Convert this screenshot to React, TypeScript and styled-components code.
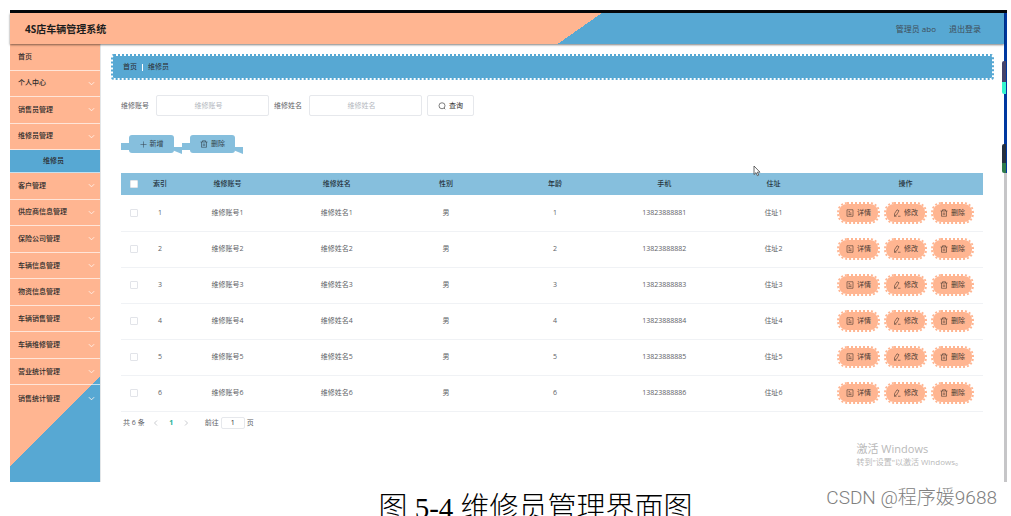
import React from 'react';
import styled, { createGlobalStyle, css } from 'styled-components';

const color = {
  blue: '#57a8d3',
  lightBlue: '#86bfdd',
  peach: '#ffb591',
  ink: '#2b2b2b',
  text: '#606266',
  line: '#e6e8ec',
};

const GlobalStyle = createGlobalStyle`
  *, *::before, *::after { box-sizing: border-box; }
  body {
    margin: 0;
    background: #fff;
    color: ${color.text};
    font-family: 'Open Sans', 'Noto Sans CJK SC', sans-serif;
    font-size: 7px;
    line-height: 10px;
  }
  button, input { font: inherit; color: inherit; margin: 0; }
  button { cursor: pointer; }
  a { color: inherit; text-decoration: none; }
`;

const Page = styled.div`
  position: relative;
  padding: 10px 4px 0 10px;
`;

const Screen = styled.div`
  position: relative;
  display: flex;
  border-top: 3px solid #05070a;
`;

const Shell = styled.div`
  flex: 1;
  min-width: 0;
`;

const Header = styled.header`
  position: relative;
  z-index: 1;
  display: flex;
  align-items: center;
  justify-content: space-between;
  height: 31px;
  padding: 0 23px 0 15px;
  background: linear-gradient(145deg, ${color.peach} 57%, ${color.blue} 57%);
  box-shadow: 0 1px 2px rgba(0, 0, 0, 0.5);
`;

const Title = styled.h1`
  margin: 0;
  font-size: 10px;
  line-height: 14px;
  font-weight: 700;
  color: #1d1d1d;
`;

const Account = styled.div`
  display: flex;
  gap: 13px;
  font-size: 8px;
  line-height: 12px;
  color: #3f4d57;
`;

const Body = styled.div`
  display: flex;
  min-height: 438px;
`;

const Sidebar = styled.nav`
  flex: 0 0 91px;
  border-right: 1px solid #e3e6e8;
  background: linear-gradient(135deg, ${color.peach} 80%, ${color.blue} 80%);
`;

const MenuList = styled.ul`
  display: grid;
  grid-template-rows: repeat(4, 1fr) 23px repeat(9, 1fr);
  height: 368px;
  margin: 0;
  padding: 0;
  list-style: none;
`;

const MenuItem = styled.li<{ $active?: boolean }>`
  display: flex;
  border-bottom: 1px solid rgba(255, 255, 255, 0.65);
  &:last-child { border-bottom: 0; }
  ${({ $active }) => $active && css`
    justify-content: center;
    background: ${color.blue};
  `}
`;

const MenuLink = styled.a<{ $sub?: boolean }>`
  flex: ${({ $sub }) => ($sub ? 'none' : 1)};
  display: flex;
  align-items: center;
  justify-content: space-between;
  padding: ${({ $sub }) => ($sub ? '0 3px 0 0' : '0 5px 0 8px')};
  font-weight: 500;
  color: ${color.ink};
`;

const Content = styled.main`
  flex: 1;
  min-width: 0;
  padding: 10px 10px 0;
`;

const Breadcrumb = styled.div`
  display: flex;
  align-items: center;
  gap: 5px;
  height: 26px;
  padding: 0 10px;
  border: 2px dotted ${color.blue};
  border-radius: 3px;
  background: ${color.blue};
  background-clip: padding-box;
  color: ${color.ink};
`;

const Divider = styled.span`
  width: 1px;
  height: 7px;
  background: #fff;
`;

const Panel = styled.section`
  padding: 15px 11px 0 10px;
`;

const Filters = styled.form`
  display: flex;
  align-items: center;
  gap: 5px;
`;

const Field = styled.label`
  display: flex;
  align-items: center;
  gap: 7px;
`;

const TextInput = styled.input`
  width: 113px;
  height: 21px;
  padding: 0 9px 0 1px;
  border: 1px solid ${color.line};
  border-radius: 2px;
  background: #fff;
  text-align: center;
  outline: none;
  &::placeholder { color: #b4b8c0; opacity: 1; }
`;

const SearchButton = styled.button`
  display: flex;
  align-items: center;
  justify-content: center;
  gap: 3px;
  width: 47px;
  height: 21px;
  padding: 0;
  border: 1px solid ${color.line};
  border-radius: 2px;
  background: #fff;
  color: ${color.ink};
`;

const Toolbar = styled.div`
  display: flex;
  margin: 19px 0;
`;

const RibbonButton = styled.button`
  display: flex;
  align-items: flex-start;
  padding: 0;
  border: 0;
  background: none;
  color: #33424c;
  &::before {
    content: '';
    width: 8px;
    height: 7px;
    margin-top: 8px;
    background: ${color.lightBlue};
  }
  &::after {
    content: '';
    width: 8px;
    height: 7px;
    margin-top: 12px;
    background: ${color.lightBlue};
    clip-path: polygon(0 0, 100% 0, 100% 100%, 0 55%);
  }
`;

const RibbonFace = styled.span`
  display: flex;
  align-items: center;
  justify-content: center;
  gap: 3px;
  width: 45px;
  height: 18px;
  border-radius: 3px;
  background: ${color.lightBlue};
`;

const Table = styled.table`
  width: 100%;
  table-layout: fixed;
  border-collapse: collapse;
  text-align: center;
`;

const HeadCell = styled.th`
  height: 22px;
  padding: 0;
  background: ${color.lightBlue};
  font-weight: 500;
  color: #26343d;
`;

const Cell = styled.td`
  height: 36px;
  padding: 0;
  border-bottom: 1px solid #f0f2f5;
`;

const Check = styled.input`
  display: block;
  width: 8px;
  height: 8px;
  margin: 0 auto;
  appearance: none;
  border: 1px solid #e2e4e9;
  border-radius: 1px;
  background: #fff;
`;

const Actions = styled.div`
  display: flex;
  justify-content: center;
  gap: 4px;
`;

const PillButton = styled.button`
  display: flex;
  align-items: center;
  justify-content: center;
  gap: 3px;
  width: 43px;
  height: 22px;
  padding: 0;
  border: 2px dotted ${color.peach};
  border-radius: 10px;
  background: ${color.peach};
  background-clip: padding-box;
  color: #4a3a33;
`;

const Pager = styled.div`
  display: flex;
  align-items: center;
  padding: 5px 2px;
`;

const PagerButton = styled.button<{ $current?: boolean }>`
  display: flex;
  justify-content: center;
  width: 15px;
  padding: 0;
  border: 0;
  background: none;
  font-weight: ${({ $current }) => ($current ? 700 : 400)};
  color: ${({ $current }) => ($current ? '#24ae95' : '#a5a8ae')};
`;

const PagerTotal = styled.span`
  margin-right: 4px;
`;

const PagerJump = styled.label`
  display: flex;
  align-items: center;
  gap: 2px;
  margin-left: 11px;
`;

const PageInput = styled.input`
  width: 24px;
  height: 12px;
  padding: 0;
  border: 1px solid ${color.line};
  border-radius: 2px;
  text-align: center;
  color: ${color.ink};
  outline: none;
`;

const EdgeStrip = styled.div`
  flex: 0 0 3px;
  background: linear-gradient(#0038a0 160px, #c6c6c8 160px);
`;

const EdgeMark = styled.span<{ $top: number; $height: number; $fill: string }>`
  position: absolute;
  right: 1px;
  top: ${({ $top }) => $top}px;
  width: 4px;
  height: ${({ $height }) => $height}px;
  border-radius: 2px 0 0 2px;
  background: ${({ $fill }) => $fill};
`;

const Pointer = styled.svg`
  position: absolute;
  left: 743px;
  top: 152px;
`;

const Activation = styled.div`
  position: absolute;
  right: 44px;
  bottom: 14px;
  font-size: 8px;
  line-height: 12px;
  color: #b9b9b9;
`;

const ActivationTitle = styled.div`
  font-size: 11px;
  line-height: 14px;
`;

const Caption = styled.p`
  height: 34px;
  margin: 0;
  padding-left: 54px;
  overflow: hidden;
  text-align: center;
  font-family: 'Liberation Serif', 'Noto Sans CJK SC', serif;
  font-size: 29px;
  line-height: 53px;
  font-weight: 300;
  color: #000;
`;

const Signature = styled.span`
  position: absolute;
  right: 14px;
  bottom: 6px;
  font-family: Roboto, 'Noto Sans CJK SC', sans-serif;
  font-size: 19px;
  line-height: 24px;
  font-weight: 300;
  color: #808080;
`;

type IconName = 'detail' | 'edit' | 'trash' | 'plus' | 'search' | 'left' | 'right' | 'down';

const iconPaths: Record<IconName, string> = {
  detail: 'M2 1.5h12v13H2zM5 5h3M5 8h6M5 11h6',
  edit: 'M8 1.500l4 2-5 8.500-4 1.500 0-4zM2 14.500h5M10 14.500h5',
  trash: 'M1 4h14M5 4V1.500h6V4M3 4v10.500h10V4M6.500 7v5M9.500 7v5',
  plus: 'M8 1v14M1 8h14',
  search: 'M8 1.500a6 6 0 1 0 0 12a6 6 0 1 0 0-12M12 12l2.500 2.500',
  left: 'M10 3L5 8l5 5',
  right: 'M6 3l5 5-5 5',
  down: 'M2 5l6 6 6-6',
};

function Icon({ name, size = 8, weight = 1.2 }: { name: IconName; size?: number; weight?: number }) {
  return (
    <svg width={size} height={size} viewBox="0 0 16 16" fill="none" stroke="currentColor" strokeWidth={weight} aria-hidden="true">
      <path d={iconPaths[name]} />
    </svg>
  );
}

const MenuArrow = styled.span`
  display: flex;
  color: #fff3ec;
`;

const menu = [
  { label: '首页', leaf: true },
  { label: '个人中心' },
  { label: '销售员管理' },
  { label: '维修员管理' },
  { label: '维修员', sub: true },
  { label: '客户管理' },
  { label: '供应商信息管理' },
  { label: '保险公司管理' },
  { label: '车辆信息管理' },
  { label: '物资信息管理' },
  { label: '车辆销售管理' },
  { label: '车辆维修管理' },
  { label: '营业统计管理' },
  { label: '销售统计管理' },
];

const columns = ['索引', '维修账号', '维修姓名', '性别', '年龄', '手机', '住址', '操作'];
const rows = [1, 2, 3, 4, 5, 6];

const actions: { icon: IconName; label: string }[] = [
  { icon: 'detail', label: '详情' },
  { icon: 'edit', label: '修改' },
  { icon: 'trash', label: '删除' },
];

export default function App() {
  return (
    <>
      <GlobalStyle />
      <Page>
        <Screen>
          <Shell>
            <Header>
              <Title>4S店车辆管理系统</Title>
              <Account>
                <span>管理员 abo</span>
                <a href="#logout">退出登录</a>
              </Account>
            </Header>
            <Body>
              <Sidebar>
                <MenuList>
                  {menu.map(({ label, leaf, sub }) => (
                    <MenuItem key={label} $active={sub}>
                      <MenuLink href="#menu" $sub={sub}>
                        {label}
                        {!leaf && !sub && <MenuArrow><Icon name="down" size={7} weight={2} /></MenuArrow>}
                      </MenuLink>
                    </MenuItem>
                  ))}
                </MenuList>
              </Sidebar>
              <Content>
                <Breadcrumb>
                  <a href="#home">首页</a>
                  <Divider />
                  <span>维修员</span>
                </Breadcrumb>
                <Panel>
                  <Filters onSubmit={(e) => e.preventDefault()}>
                    <Field>维修账号<TextInput placeholder="维修账号" /></Field>
                    <Field>维修姓名<TextInput placeholder="维修姓名" /></Field>
                    <SearchButton type="submit"><Icon name="search" />查询</SearchButton>
                  </Filters>
                  <Toolbar>
                    <RibbonButton type="button"><RibbonFace><Icon name="plus" size={7} />新增</RibbonFace></RibbonButton>
                    <RibbonButton type="button"><RibbonFace><Icon name="trash" />删除</RibbonFace></RibbonButton>
                  </Toolbar>
                  <Table>
                    <colgroup>
                      <col width="26" />
                      <col width="26" />
                      <col span={6} />
                      <col width="155" />
                    </colgroup>
                    <thead>
                      <tr>
                        <HeadCell><Check type="checkbox" aria-label="全选" /></HeadCell>
                        {columns.map((name) => <HeadCell key={name}>{name}</HeadCell>)}
                      </tr>
                    </thead>
                    <tbody>
                      {rows.map((n) => (
                        <tr key={n}>
                          <Cell><Check type="checkbox" aria-label={`选择 ${n}`} /></Cell>
                          <Cell>{n}</Cell>
                          <Cell>维修账号{n}</Cell>
                          <Cell>维修姓名{n}</Cell>
                          <Cell>男</Cell>
                          <Cell>{n}</Cell>
                          <Cell>1382388888{n}</Cell>
                          <Cell>住址{n}</Cell>
                          <Cell>
                            <Actions>
                              {actions.map(({ icon, label }) => (
                                <PillButton key={label} type="button"><Icon name={icon} />{label}</PillButton>
                              ))}
                            </Actions>
                          </Cell>
                        </tr>
                      ))}
                    </tbody>
                  </Table>
                  <Pager>
                    <PagerTotal>共 6 条</PagerTotal>
                    <PagerButton type="button" aria-label="上一页"><Icon name="left" /></PagerButton>
                    <PagerButton type="button" $current>1</PagerButton>
                    <PagerButton type="button" aria-label="下一页"><Icon name="right" /></PagerButton>
                    <PagerJump>前往<PageInput defaultValue="1" />页</PagerJump>
                  </Pager>
                </Panel>
              </Content>
            </Body>
          </Shell>
          <EdgeStrip />
          <EdgeMark $top={48} $height={33} $fill="linear-gradient(#45436b 21px, #35f5cf 21px)" />
          <EdgeMark $top={131} $height={29} $fill="linear-gradient(#26303f 19px, #2f7a4c 19px)" />
          <Pointer width="8" height="12" viewBox="0 0 8 12" aria-hidden="true">
            <path d="M1 1v8.500l2-1.800 1.400 3 1.300-.6-1.400-2.900H7z" fill="#fff" stroke="#444" strokeWidth="0.8" />
          </Pointer>
          <Activation>
            <ActivationTitle>激活 Windows</ActivationTitle>
            转到"设置"以激活 Windows。
          </Activation>
        </Screen>
        <Caption>图 5-4 维修员管理界面图</Caption>
        <Signature>CSDN @程序媛9688</Signature>
      </Page>
    </>
  );
}
